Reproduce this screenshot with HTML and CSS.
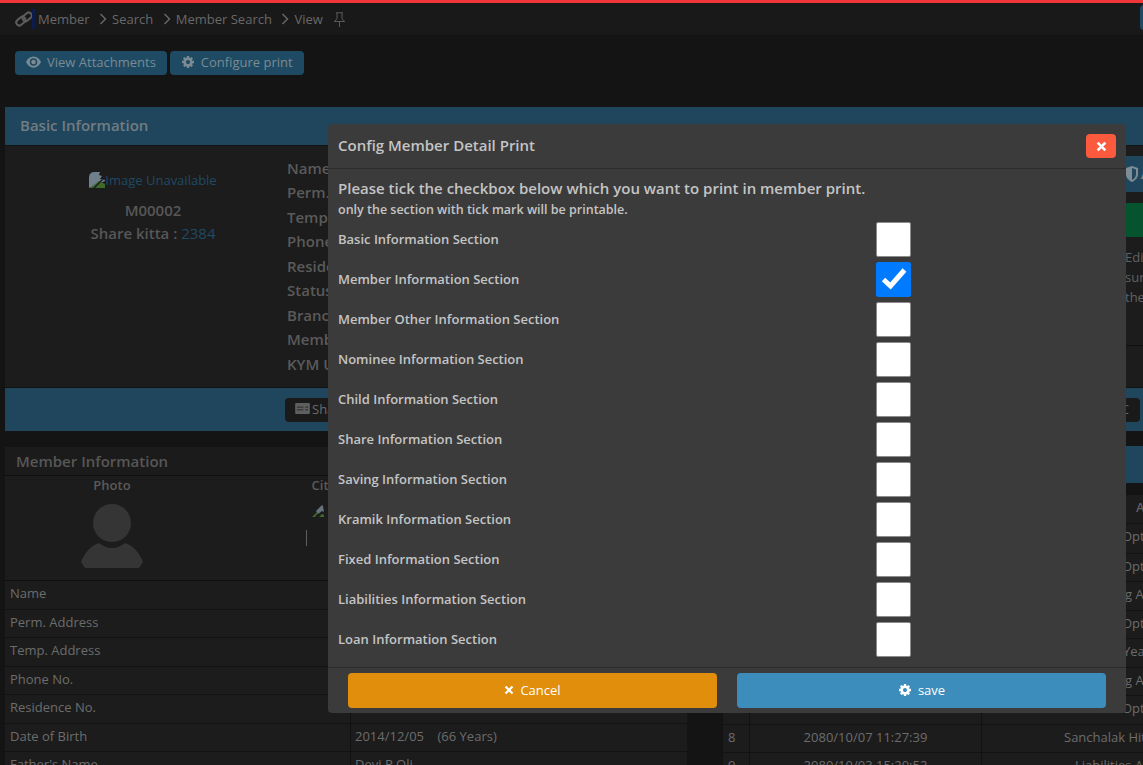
FILE: index.html
```html
<!DOCTYPE html>
<html lang="en">
<head>
<meta charset="utf-8">
<title>Member View</title>
<link rel="stylesheet" href="styles.css">
</head>
<body>
<svg class="defs" width="0" height="0" aria-hidden="true">
  <symbol id="cog" viewBox="0 0 1792 1792"><path fill-rule="evenodd" d="M1152 896q0-106-75-181t-181-75-181 75-75 181 75 181 181 75 181-75 75-181zm512-109v222q0 12-8 23t-20 13l-185 28q-19 54-39 91 35 50 107 138 10 12 10 25t-9 23q-27 37-99 108t-94 71q-12 0-26-9l-138-108q-44 23-91 38-16 136-29 186-7 28-36 28h-222q-14 0-24.500-8.500t-11.500-21.500l-28-184q-49-16-90-37l-141 107q-10 9-25 9-14 0-25-11-126-114-165-168-7-10-7-23 0-12 8-23 15-21 51-66.500t54-70.500q-27-50-41-99l-183-27q-13-2-21-12.500t-8-23.500v-222q0-12 8-23t19-13l186-28q14-46 39-92-40-57-107-138-10-12-10-24 0-10 9-23 26-36 98.500-107.500t94.500-71.500q13 0 26 10l138 107q44-23 91-38 16-136 29-186 7-28 36-28h222q14 0 24.500 8.500t11.500 21.500l28 184q49 16 90 37l142-107q9-9 24-9 13 0 25 10 129 119 165 170 7 8 7 22 0 12-8 23-15 21-51 66.500t-54 70.500q26 50 41 98l183 28q13 2 21 12.500t8 23.500z"/></symbol>
  <symbol id="broken" viewBox="0 0 16 16"><path fill="#6f7f8c" d="M0 5a5 5 0 0 1 5-5h6l-1 3 3 1-2 3 5 1v1L0 16z"/><path fill="#3e6a2c" d="M1 16l9-7 6 3v4z"/><path fill="#1c1c1c" d="M4 16l9-9 1 1-8 8z"/></symbol>
  <symbol id="broken-small" viewBox="0 0 12 12"><path fill="#3e6a2c" d="M0 12l5-5 1 1-3 4zM7 12l3-3 2 1v2z"/><path fill="#66727c" d="M4 6l6-6 1 1 1 6-2-1-4 3z"/></symbol>
</svg>

<div class="app">
  <nav class="crumbs">
    <svg class="crumb-link" viewBox="0 0 18 18" width="18" height="18"><g fill="none" stroke="#5d5d5d" stroke-width="2"><rect x="0.8" y="8" width="10" height="6" rx="3" transform="rotate(-40 6 11)"/><rect x="7.200" y="4" width="10" height="6" rx="3" transform="rotate(-40 12 7)"/></g></svg>
    <span class="crumb-mark"></span>
    <span class="crumb">Member</span>
    <svg class="chev" viewBox="0 0 8 12" width="8" height="12"><path d="M1.500 1l5 5-5 5" fill="none" stroke="#666" stroke-width="1.500"/></svg>
    <span class="crumb">Search</span>
    <svg class="chev" viewBox="0 0 8 12" width="8" height="12"><path d="M1.500 1l5 5-5 5" fill="none" stroke="#666" stroke-width="1.500"/></svg>
    <span class="crumb">Member Search</span>
    <svg class="chev" viewBox="0 0 8 12" width="8" height="12"><path d="M1.500 1l5 5-5 5" fill="none" stroke="#666" stroke-width="1.500"/></svg>
    <span class="crumb">View</span>
    <svg class="pin" viewBox="0 0 13 15" width="13" height="15"><path d="M3 .8h7M4 .8v6L1.200 9.500h10.600L9 6.800v-6M6.500 9.500V15" fill="none" stroke="#5a5a5a" stroke-width="1"/></svg>
    <span class="crumb-end"></span>
  </nav>

  <div class="toolbar">
    <button class="tool-btn" type="button">
      <svg viewBox="0 0 16 12" width="15" height="12"><path fill="#7b8a93" fill-rule="evenodd" d="M8 0c3.500 0 6.500 2.300 8 6-1.500 3.700-4.500 6-8 6S1.500 9.700 0 6c1.500-3.700 4.500-6 8-6zm0 2a4 4 0 1 0 0 8 4 4 0 0 0 0-8z"/><circle cx="8" cy="6" r="2.400" fill="#7b8a93"/></svg>
      View Attachments
    </button>
    <button class="tool-btn" type="button">
      <svg class="cog-ico" width="14" height="14"><use href="#cog"/></svg>
      Configure print
    </button>
  </div>

  <section class="basic">
    <h2 class="basic-head">Basic Information</h2>
    <div class="basic-body">
      <div class="id-col">
        <a class="img-alt"><svg width="16" height="16"><use href="#broken"/></svg>Image Unavailable</a>
        <div class="id-code">M00002</div>
        <div class="id-share">Share kitta : <span class="id-num">2384</span></div>
      </div>
      <dl class="fields">
        <dt>Name</dt><dt>Perm. Address</dt><dt>Temp. Address</dt><dt>Phone No.</dt><dt>Residence No.</dt><dt>Status</dt><dt>Branch</dt><dt>Member Type</dt><dt>KYM Update</dt>
      </dl>
      <aside class="side">
        <div class="side-head"><svg class="shield" viewBox="0 0 12 16" width="12" height="16"><path fill="#7f8c94" fill-rule="evenodd" d="M6 0l6 2v6c0 4-3 6.500-6 8-3-1.500-6-4-6-8V2zm0 2v12c2-1.200 4-3 4-6V3.400z"/></svg><span class="side-title">Actions</span></div>
        <div class="side-green"></div>
        <p class="side-text">Edit</p>
        <p class="side-text">sure</p>
        <p class="side-text">the</p>
      </aside>
    </div>
    <div class="basic-foot">
      <button class="foot-btn" type="button">
        <svg viewBox="0 0 16 12" width="15" height="11"><path fill="#5f5f5f" fill-rule="evenodd" d="M1 0h14a1 1 0 0 1 1 1v10a1 1 0 0 1-1 1H1a1 1 0 0 1-1-1V1a1 1 0 0 1 1-1zm1 4v1h7V4zm9 0v1h3V4zM2 7v1h7V7zm9 0v1h3V7z"/></svg>Share
      </button>
      <button class="foot-btn foot-end" type="button">C</button>
    </div>
  </section>

  <div class="lower">
    <section class="member">
      <h2 class="member-head">Member Information</h2>
      <div class="photos">
        <div class="photo-cell">
          <div class="photo-title">Photo</div>
          <svg viewBox="0 0 62 64" width="62" height="64"><circle cx="31" cy="19" r="19" fill="#353535"/><path fill="#353535" d="M18 39c4 3 8 5 13 5s9-2 13-5c9 3 15 11 18 19l-4 6H4l-4-6c3-8 9-16 18-19z"/></svg>
        </div>
        <div class="photo-cell cit-cell">
          <div class="photo-title">Citizenship</div>
          <svg class="cit-img" width="12" height="12"><use href="#broken-small"/></svg>
          <span class="cit-line"></span>
        </div>
      </div>
      <div class="row"><span class="key">Name</span><span class="val"></span></div>
      <div class="row"><span class="key">Perm. Address</span><span class="val"></span></div>
      <div class="row"><span class="key">Temp. Address</span><span class="val"></span></div>
      <div class="row"><span class="key">Phone No.</span><span class="val"></span></div>
      <div class="row"><span class="key">Residence No.</span><span class="val"></span></div>
      <div class="row"><span class="key">Date of Birth</span><span class="val">2014/12/05 &nbsp;&nbsp;&nbsp;(66 Years)</span></div>
      <div class="row"><span class="key">Father's Name</span><span class="val">Devi P Oli</span></div>
    </section>

    <section class="log">
      <div class="log-head"></div>
      <div class="lrow lrow-head"><span class="no"></span><span class="when"></span><span class="what">Activity</span></div>
      <div class="lrow lrow-tall"><span class="no"></span><span class="when"></span><span class="what t-opt">Option</span></div>
      <div class="lrow"><span class="no"></span><span class="when"></span><span class="what t-opt">Option</span></div>
      <div class="lrow"><span class="no"></span><span class="when"></span><span class="what t-acc">Saving Account</span></div>
      <div class="lrow"><span class="no"></span><span class="when"></span><span class="what t-opt">Option</span></div>
      <div class="lrow"><span class="no"></span><span class="when"></span><span class="what t-year">Year</span></div>
      <div class="lrow"><span class="no"></span><span class="when"></span><span class="what t-acc">Saving Account</span></div>
      <div class="lrow"><span class="no"></span><span class="when"></span><span class="what t-opt">Option</span></div>
      <div class="lrow"><span class="no">8</span><span class="when">2080/10/07 11:27:39</span><span class="what t-san">Sanchalak Hitaishi</span></div>
      <div class="lrow"><span class="no">9</span><span class="when">2080/10/03 15:20:52</span><span class="what t-lia">Liabilities Account</span></div>
    </section>
  </div>

  <div class="modal" role="dialog" aria-label="Config Member Detail Print">
    <header class="modal-head">
      <h3 class="modal-title">Config Member Detail Print</h3>
      <button class="close" type="button" aria-label="Close"><svg viewBox="0 0 10 10" width="11" height="11"><path d="M1.500 1.500l7 7M8.500 1.500l-7 7" stroke="#fff" stroke-width="2.400" fill="none"/></svg></button>
    </header>
    <div class="modal-body">
      <p class="lead">Please tick the checkbox below which you want to print in member print.</p>
      <p class="sub">only the section with tick mark will be printable.</p>
      <div class="opt"><span class="opt-label">Basic Information Section</span><span class="box"></span></div>
      <div class="opt"><span class="opt-label">Member Information Section</span><span class="box checked"><svg viewBox="0 0 26 24" width="26" height="24"><path d="M2.500 12.500l7 6.500 14-16" fill="none" stroke="#fff" stroke-width="5"/></svg></span></div>
      <div class="opt"><span class="opt-label">Member Other Information Section</span><span class="box"></span></div>
      <div class="opt"><span class="opt-label">Nominee Information Section</span><span class="box"></span></div>
      <div class="opt"><span class="opt-label">Child Information Section</span><span class="box"></span></div>
      <div class="opt"><span class="opt-label">Share Information Section</span><span class="box"></span></div>
      <div class="opt"><span class="opt-label">Saving Information Section</span><span class="box"></span></div>
      <div class="opt"><span class="opt-label">Kramik Information Section</span><span class="box"></span></div>
      <div class="opt"><span class="opt-label">Fixed Information Section</span><span class="box"></span></div>
      <div class="opt"><span class="opt-label">Liabilities Information Section</span><span class="box"></span></div>
      <div class="opt"><span class="opt-label">Loan Information Section</span><span class="box"></span></div>
    </div>
    <footer class="modal-foot">
      <button class="act act-cancel" type="button"><svg viewBox="0 0 10 10" width="10" height="10"><path d="M1.500 1.500l7 7M8.500 1.500l-7 7" stroke="#fff" stroke-width="2.200" fill="none"/></svg>Cancel</button>
      <button class="act act-save" type="button"><svg class="cog-white" width="14" height="14"><use href="#cog"/></svg>save</button>
    </footer>
  </div>
</div>
</body>
</html>
```

FILE: styles.css
```css
* { box-sizing: border-box; }
html, body { margin: 0; padding: 0; height: 100%; }
body {
  background: #141414;
  font-family: "Open Sans", "Liberation Sans", sans-serif;
  font-size: 13px;
  color: #6c6c6c;
  overflow: hidden;
}
.defs { position: absolute; }
button { font-family: inherit; cursor: pointer; }

.app { position: relative; width: 1143px; height: 765px; overflow: hidden; }

/* breadcrumb */
.crumbs {
  height: 35px;
  border-top: 3px solid #f23539;
  background: #191919;
  display: flex;
  align-items: center;
  padding-left: 15px;
  position: relative;
}
.crumb-link { flex: none; }
.crumb-mark { width: 3px; height: 20px; background: #0b1c4d; margin-left: -1px; margin-right: 3px; }
.crumb { font-size: 13px; color: #686868; line-height: 18px; }
.chev { margin: 0 5px 0 9.500px; flex: none; }
.pin { margin-left: 10px; }
.crumb-end { position: absolute; right: -5px; top: 2px; width: 8px; height: 25px; border-radius: 4px; background: #1f4a63; }

/* toolbar */
.toolbar { display: flex; gap: 3px; padding: 16px 0 0 15px; height: 72px; }
.tool-btn {
  height: 24px;
  padding: 0 11px 2px;
  border: 0;
  border-radius: 4px;
  background: #1f4a63;
  color: #7b8a93;
  font-size: 13px;
  display: flex;
  align-items: center;
  gap: 6px;
}
.cog-ico { fill: #7b8a93; }

/* basic panel */
.basic { margin-left: 5px; }
.basic-head {
  margin: 0;
  height: 38px;
  padding-left: 15px;
  background: #1f465d;
  color: #727c82;
  font-size: 15px;
  font-weight: 600;
  line-height: 37px;
}
.basic-body {
  height: 241px;
  margin-top: 1px;
  background: #1c1c1c;
  display: flex;
  position: relative;
}
.id-col { width: 282px; flex: none; padding: 25px 0 0 14px; text-align: center; font-weight: 600; font-size: 15px; color: #575757; }
.img-alt { display: flex; justify-content: center; align-items: center; font-weight: 400; font-size: 13px; color: #1f4a63; line-height: 18px; }
.id-code { margin-top: 11px; line-height: 20px; }
.id-share { margin-top: 3px; line-height: 20px; white-space: nowrap; }
.id-num { color: #1f4a63; font-weight: 400; }
.fields { margin: 9.750px 0 0; width: 300px; flex: none; }
.fields dt { font-size: 15px; font-weight: 600; color: #5a5a5a; line-height: 24.500px; height: 24.500px; white-space: nowrap; }
.side { margin-left: auto; width: 200px; height: 200px; border-bottom: 1px solid #111; white-space: nowrap; overflow: hidden; }
.side-head { height: 36px; margin-top: 10px; background: #1f465d; display: flex; align-items: center; padding-left: 183px; gap: 3px; }
.shield { flex: none; }
.side-title { color: #7f8c94; font-weight: 600; }
.side-green { height: 34px; margin-top: 11px; background: #05532f; }
.side-text { margin: 0; padding-left: 182px; line-height: 20px; font-size: 13px; color: #626262; }
.side-green + .side-text { margin-top: 10px; }
.basic-foot {
  height: 44px;
  background: #1f465d;
  border-top: 1px solid #111;
  display: flex;
  align-items: center;
  padding: 0 3px 0 280px;
  justify-content: space-between;
}
.foot-btn {
  height: 24px;
  padding: 0 10px 2px;
  border: 0;
  border-radius: 4px;
  background: #1a1a1a;
  color: #6b6b6b;
  font-size: 13px;
  display: flex;
  align-items: center;
  gap: 2px;
}
.foot-end { width: 40px; justify-content: flex-end; padding-right: 11px; }

/* lower */
.lower { display: flex; margin-top: 16px; align-items: flex-start; }
.member { margin-left: 5px; width: 682px; background: #1c1c1c; flex: none; }
.member-head {
  margin: 0;
  height: 29px;
  padding-left: 11px;
  background: #1b1b1b;
  border-bottom: 1px solid #101010;
  color: #575757;
  font-size: 15px;
  font-weight: 600;
  line-height: 28px;
}
.photos { display: flex; height: 105px; border-bottom: 1px solid #101010; }
.photo-cell { width: 214px; text-align: center; flex: none; }
.photo-title { font-size: 13px; font-weight: 600; color: #5a5a5a; line-height: 18px; margin-bottom: 10px; }
.cit-cell { width: 254px; position: relative; }
.cit-img { position: absolute; left: 93px; top: 29px; }
.cit-line { position: absolute; left: 87px; top: 54px; width: 1px; height: 16px; background: #5e5e5e; }
.row { display: flex; height: 28.500px; border-bottom: 1px solid #121212; line-height: 25px; white-space: nowrap; }
.key { width: 346px; flex: none; padding-left: 5px; border-right: 1px solid #121212; }
.val { padding-left: 4px; }

.log { margin-left: 35px; width: 440px; flex: none; }
.log-head { height: 37px; margin-top: -1px; background: #1f465d; }
.lrow { display: flex; height: 28.500px; border-top: 1px solid #121212; background: #1c1c1c; line-height: 25px; white-space: nowrap; }
.lrow-head { margin-top: 11px; font-weight: 600; color: #5f5f5f; }
.lrow-tall { height: 30px; }
.no { width: 28px; flex: none; padding-left: 5px; border-left: 1px solid #121212; border-right: 1px solid #121212; }
.when { width: 232px; flex: none; text-align: center; border-right: 1px solid #121212; }
.what { flex: 1; }
.lrow-head .what { padding-left: 154px; }
.t-opt { padding-left: 140px; }
.t-acc { padding-left: 111px; }
.t-year { padding-left: 141px; }
.t-san { padding-left: 82px; }
.t-lia { padding-left: 93px; }

/* modal */
.modal {
  position: absolute;
  left: 328px;
  top: 124px;
  width: 798px;
  height: 589px;
  background: #3b3b3b;
  border-radius: 4px;
  display: flex;
  flex-direction: column;
  color: #c4c4c4;
}
.modal-head {
  height: 45px;
  flex: none;
  border-bottom: 1px solid #2b2b2b;
  display: flex;
  align-items: center;
  justify-content: space-between;
  padding: 0 10px;
}
.modal-title { margin: 0 0 2px; font-size: 15px; font-weight: 600; line-height: 20px; }
.close {
  width: 30px;
  height: 24px;
  border: 0;
  border-radius: 4px;
  background: #fb5a3e;
  display: flex;
  align-items: center;
  justify-content: center;
  padding: 0;
}
.modal-body { flex: 1; padding: 9px 0 0 10px; }
.lead { margin: 0; font-size: 15px; font-weight: 600; line-height: 20px; white-space: nowrap; }
.sub { margin: 2px 0 0; font-size: 12.500px; font-weight: 600; line-height: 19px; }
.opt { display: flex; align-items: center; height: 40px; }
.opt-label { width: 538px; flex: none; font-size: 13px; font-weight: 600; }
.box {
  width: 35px;
  height: 35px;
  background: #fff;
  border: 1px solid #8c8c8c;
  border-radius: 2px;
  display: flex;
  align-items: center;
  justify-content: center;
}
.box.checked { background: #007bff; border-color: #007bff; }
.modal-foot {
  height: 46px;
  flex: none;
  border-top: 1px solid #2b2b2b;
  display: flex;
  gap: 20px;
  padding: 5px 20px 0;
}
.act {
  flex: 1;
  height: 35px;
  padding: 0 0 2px;
  border: 0;
  border-radius: 4px;
  color: #fff;
  font-size: 13px;
  display: flex;
  align-items: center;
  justify-content: center;
  gap: 6px;
}
.act-cancel { background: #e08e0b; }
.act-save { background: #3c8dbc; }
.cog-white { fill: #fff; }
```
